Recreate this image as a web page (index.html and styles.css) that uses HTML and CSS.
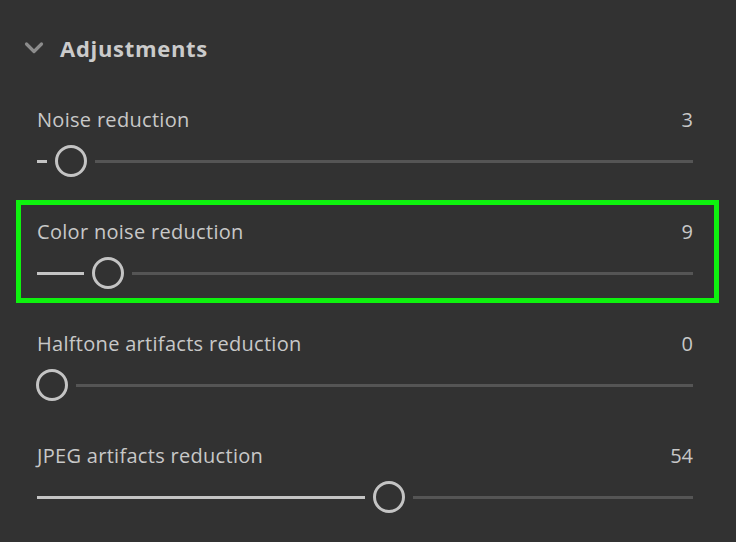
FILE: index.html
```html
<!DOCTYPE html>
<html>
<head>
<meta charset="utf-8">
<link rel="stylesheet" href="styles.css">
</head>
<body>
<div class="panel">
  <div class="header">
    <svg class="chevron" width="20" height="14" viewBox="0 0 20 14"><path d="M2.5 3 L10 10.5 L17.5 3" fill="none" stroke="#8c8c8c" stroke-width="3.2" stroke-linecap="round" stroke-linejoin="round"/></svg>
    <span class="title">Adjustments</span>
  </div>
  <div class="rows">
    <div class="row">
      <div class="label-line"><span>Noise reduction</span><span>3</span></div>
      <div class="slider"><div class="fill" style="width:10px"></div><div class="thumb"></div><div class="rest"></div></div>
    </div>
    <div class="row selected">
      <div class="label-line"><span>Color noise reduction</span><span>9</span></div>
      <div class="slider"><div class="fill" style="width:47px"></div><div class="thumb"></div><div class="rest"></div></div>
    </div>
    <div class="row">
      <div class="label-line"><span>Halftone artifacts reduction</span><span>0</span></div>
      <div class="slider"><div class="thumb first"></div><div class="rest"></div></div>
    </div>
    <div class="row">
      <div class="label-line"><span>JPEG artifacts reduction</span><span>54</span></div>
      <div class="slider"><div class="fill" style="width:328px"></div><div class="thumb"></div><div class="rest"></div></div>
    </div>
  </div>
</div>
</body>
</html>
```
FILE: styles.css
```css
html, body {
  margin: 0;
  padding: 0;
  background: #323232;
}
body {
  width: 736px;
  height: 542px;
  overflow: hidden;
  font-family: "Open Sans", Lato, sans-serif;
  color: #c8c8c8;
}
.panel {
  padding-left: 16px;
}
.header {
  display: flex;
  align-items: center;
  gap: 16px;
  padding-top: 34px;
  padding-left: 8px;
  height: 28px;
  margin-bottom: 26px;
}
.chevron {
  display: block;
}
.title {
  font-size: 22px;
  font-weight: 700;
  letter-spacing: 0.7px;
  line-height: 28px;
  color: #cbcbcb;
}
.rows {
  display: flex;
  flex-direction: column;
  gap: 9px;
}
.row {
  width: 703px;
  height: 103px;
  box-sizing: border-box;
  border: 5px solid transparent;
  padding: 13px 21px 0 16px;
}
.row.selected {
  border-color: #0ef20e;
}
.label-line {
  display: flex;
  justify-content: space-between;
  font-size: 20px;
  letter-spacing: 0.3px;
  line-height: 28px;
  height: 28px;
}
.label-line span:last-child {
  letter-spacing: 0;
}
.slider {
  display: flex;
  align-items: center;
  height: 32px;
  margin-top: 11px;
}
.fill {
  height: 3px;
  background: #c4c4c4;
  margin-right: 8px;
  flex: none;
}
.thumb {
  width: 32px;
  height: 32px;
  box-sizing: border-box;
  border: 3px solid #c4c4c4;
  border-radius: 50%;
  background: #323232;
  flex: none;
}
.thumb.first {
  margin-left: -1px;
}
.rest {
  flex: 1;
  height: 3px;
  background: #555555;
  margin-left: 8px;
}
```
